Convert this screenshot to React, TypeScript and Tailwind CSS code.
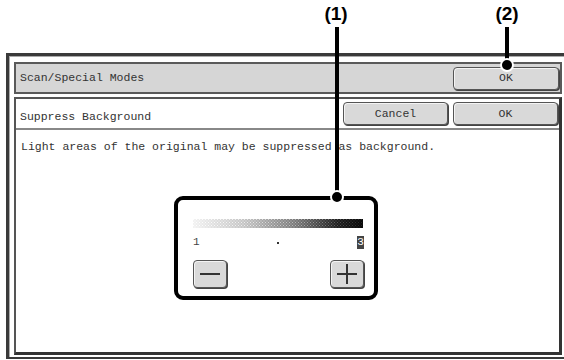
import React from "react";

const mono = { fontFamily: '"Liberation Mono", "DejaVu Sans Mono", monospace' };

function Btn({ label, className = "" }: { label: string; className?: string }) {
  return (
    <div
      className={`flex items-center justify-center rounded-[4px] border border-[#555] bg-[#d9d9d9] text-[11.5px] text-[#333] shadow-[inset_1px_1px_0_#f4f4f4,1px_1px_0_#444] ${className}`}
    >
      {label}
    </div>
  );
}

function Callout({ x, label }: { x: number; label: string }) {
  return (
    <div
      className="absolute top-[4px] -translate-x-1/2 text-[19px] font-bold leading-none text-black"
      style={{ left: x, fontFamily: '"Liberation Sans", Arial, sans-serif' }}
    >
      {label}
    </div>
  );
}

// dithered density bar, light to black
function DensityBar() {
  return (
    <svg width="170" height="9" className="block">
      <defs>
        <linearGradient id="dens" x1="0" x2="1" y1="0" y2="0">
          <stop offset="0" stopColor="#f2f2f2" />
          <stop offset="0.3" stopColor="#c4c4c4" />
          <stop offset="0.6" stopColor="#7a7a7a" />
          <stop offset="0.85" stopColor="#1e1e1e" />
          <stop offset="1" stopColor="#080808" />
        </linearGradient>
        <pattern id="dots" width="3" height="3" patternUnits="userSpaceOnUse">
          <rect width="1" height="1" fill="#fff" />
          <rect x="1.5" y="1.5" width="1" height="1" fill="#fff" />
        </pattern>
        <linearGradient id="fade" x1="0" x2="1" y1="0" y2="0">
          <stop offset="0" stopColor="#fff" stopOpacity="0.9" />
          <stop offset="0.75" stopColor="#fff" stopOpacity="0.35" />
          <stop offset="1" stopColor="#fff" stopOpacity="0.1" />
        </linearGradient>
        <mask id="m">
          <rect width="170" height="9" fill="url(#fade)" />
        </mask>
      </defs>
      <rect width="170" height="9" fill="url(#dens)" />
      <rect width="170" height="9" fill="url(#dots)" mask="url(#m)" />
    </svg>
  );
}

export default function App() {
  return (
    <div className="relative h-[360px] w-[564px] overflow-hidden bg-white" style={mono}>
      <div className="h-[53px]" />

      {/* window frame, runs off the right edge */}
      <div className="ml-[6px] h-[306px] w-[600px] border-b-2 border-l-[3px] border-t-[3px] border-[#3a3a3a]">
        <div className="h-full border-l border-t border-[#aaa] pl-[4px] pt-[5px]">
          <div className="flex h-[32px] w-[548px] items-center justify-between border-2 border-[#5a5a5a] bg-[#d6d6d6] pl-[4px] pr-[1px]">
            <span className="text-[11.5px] text-[#333]">Scan/Special Modes</span>
            <Btn label="OK" className="h-[23px] w-[106px]" />
          </div>

          <div className="mt-[3px] h-[258px] w-[548px] border-b-[3px] border-l-2 border-r-[3px] border-t-2 border-b-[#333] border-l-[#555] border-r-[#333] border-t-[#555] bg-white">
            <div className="flex h-[31px] items-center justify-between border-b-2 border-[#888] pl-[4px] pr-[1px]">
              <span className="self-end pb-[4px] text-[11.5px] leading-[14px] text-[#333]">Suppress Background</span>
              <div className="flex gap-[5px]">
                <Btn label="Cancel" className="h-[23px] w-[105px]" />
                <Btn label="OK" className="h-[23px] w-[105px]" />
              </div>
            </div>
            <div className="pl-[5px] pt-[10px] text-[11.5px] leading-[14px] text-[#333]">
              Light areas of the original may be suppressed as background.
            </div>

            <div className="ml-[177px] mt-[65px] w-[171px]">
              <DensityBar />
              <div className="mt-[8px] flex h-[13px] items-center justify-between text-[11px] leading-none text-[#444]">
                <span className="w-[6px]">1</span>
                <span className="h-[2px] w-[2px] bg-[#333]" />
                <span className="flex h-[13px] w-[7px] items-center justify-center bg-[#444] text-white">3</span>
              </div>
              <div className="mt-[11px] flex justify-between">
                <div className="flex h-[28px] w-[34px] items-center justify-center rounded-[4px] border border-[#555] bg-[#d9d9d9] shadow-[inset_1px_1px_0_#f4f4f4,1px_1px_0_#444]">
                  <div className="h-[1.5px] w-[20px] bg-[#333]" />
                </div>
                <div className="relative flex h-[28px] w-[34px] items-center justify-center rounded-[4px] border border-[#555] bg-[#d9d9d9] shadow-[inset_1px_1px_0_#f4f4f4,1px_1px_0_#444]">
                  <div className="h-[1.5px] w-[20px] bg-[#333]" />
                  <div className="absolute h-[20px] w-[1.5px] bg-[#333]" />
                </div>
              </div>
            </div>
          </div>
        </div>
      </div>

      {/* annotations */}
      <Callout x={336} label="(1)" />
      <Callout x={507} label="(2)" />
      <div className="absolute left-[335px] top-[27px] h-[170px] w-[4px] bg-black" />
      <div className="absolute left-[505px] top-[27px] h-[38px] w-[4px] bg-black" />
      <div className="absolute left-[174px] top-[196px] h-[104px] w-[204px] rounded-[9px] border-4 border-black" />
      <div className="absolute left-[330px] top-[190px] h-[14px] w-[14px] rounded-full border-2 border-white bg-black" />
      <div className="absolute left-[500px] top-[58px] h-[14px] w-[14px] rounded-full border-2 border-white bg-black" />
    </div>
  );
}
